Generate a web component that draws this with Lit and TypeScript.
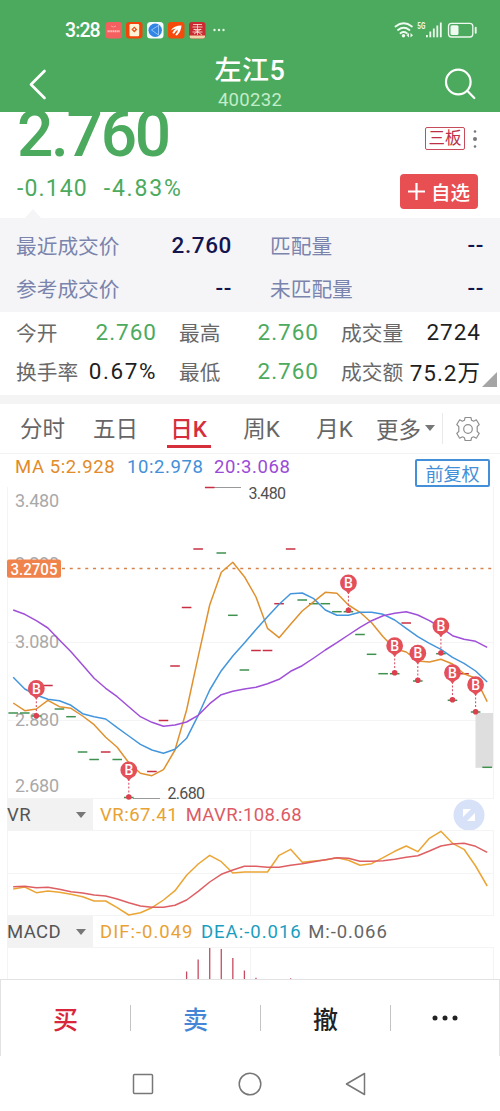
import { LitElement, html, svg, css } from "lit";
import { customElement } from "lit/decorators.js";
import { classMap } from "lit/directives/class-map.js";

const STEP = 11.56;
const px = (i: number) => 13.2 + STEP * i;
const line = (ys: number[]) => ys.map((y, i) => `${px(i).toFixed(1)},${y}`).join(" ");

const MA5 = [703, 710.7, 709, 700.3, 706.7, 708.3, 716, 724.7, 737.3, 747.3, 762.7, 773.3, 775.7, 769.7, 750, 710, 656.7, 605, 572.3, 562.3, 576.7, 597, 628.3, 637.7, 624.3, 611, 601.7, 592.3, 593.3, 605, 612.3, 622.7, 636.7, 648.7, 652, 661, 662, 659.3, 664, 673.7, 678.3, 701.7];
const MA10 = [677.3, 689, 695, 699.3, 700.7, 705.3, 713.7, 716.7, 719, 727.7, 736, 744.3, 750, 753.3, 749.3, 738.3, 715.3, 690, 670.7, 656, 643, 629.5, 616.7, 604.3, 593.7, 593, 598.7, 610, 615.3, 615.3, 612.3, 612.3, 614.3, 620, 628.3, 636.7, 643.3, 649.3, 657.3, 663.3, 671, 682];
const MA20 = [610, 614.3, 620.7, 628, 640, 651.7, 665, 678.3, 688.3, 696.7, 706.7, 716.7, 722.3, 726.3, 725, 722, 715.3, 703.7, 694.7, 691.3, 689, 687.3, 683.7, 679.3, 671.3, 665.7, 658, 650, 642.7, 635, 627.3, 620.7, 615.7, 613.3, 611.7, 615, 620.7, 627.5, 635.7, 639.3, 641.3, 647.3];
const VR = [889, 887, 892.7, 891, 892.3, 894.3, 896.7, 901, 901, 907.7, 915, 912.7, 907.7, 900, 890.7, 875.3, 864, 855.3, 861.7, 873, 872, 872, 872, 855.3, 849.3, 862.3, 861, 860, 857.7, 860.3, 865.3, 863.7, 857.7, 851.3, 846, 851.7, 838.3, 831.3, 843.3, 849.3, 866, 886];
const MAVR = [886.7, 886.3, 887.7, 887.3, 889.3, 891.7, 893, 895, 896, 899, 902.7, 906, 907.3, 907.3, 905.3, 900, 891.3, 882, 874.3, 870, 866.3, 866.3, 867.3, 867.3, 865.3, 863.7, 861.7, 859.7, 857.7, 858.3, 861.3, 861.3, 860.7, 859.3, 857.3, 855.7, 851, 846, 844, 843.3, 846.3, 852.3];

const UP: [number, number][] = [[3, 685.5], [8, 752], [12, 771.5], [13, 720.5], [14, 666], [15, 607.5], [16, 549], [17, 487.5], [21, 650.5], [22, 650.5], [23, 603.7], [24, 549], [34, 623], [39, 673.7]];
const DOWN: [number, number][] = [[0, 713], [1, 713], [2, 716], [4, 709], [5, 716.7], [6, 752], [7, 759.5], [9, 759.5], [10, 797.5], [18, 553], [19, 615.3], [20, 670], [25, 600], [26, 603.7], [27, 603.7], [28, 611.7], [29, 611.7], [30, 634.5], [31, 654.3], [32, 673.7], [33, 673.7], [35, 681], [37, 653.7], [38, 700.3], [40, 712], [41, 767.3]];
const BUYS: [number, number, number][] = [[2, 688.5, 715.7], [10, 770, 797], [29, 583, 610.3], [33, 645.7, 672.7], [35, 653.2, 680.3], [37, 626, 653], [38, 672.7, 699.8], [40, 684.7, 711.7]];
const MACD: [number, number][] = [[15, 971.5], [16, 959.5], [17, 948], [18, 949], [19, 958], [20, 970.5], [21, 977.8], [24, 978.3]];

@customElement("price-chart")
class PriceChart extends LitElement {
  static styles = css`
    :host { display: block; height: 319px; }
    svg { display: block; overflow: visible; }
    text { font-family: Roboto, "Liberation Sans", sans-serif; }
    .axis { fill: #a9a9a9; font-size: 18px; }
    .edge { fill: #505050; font-size: 16px; }
    .tag { fill: #fff; font-size: 17px; font-weight: 500; }
    .b { fill: #fff; font-size: 14px; font-weight: 500; text-anchor: middle; }
  `;
  render() {
    const dash = (color: string) => ([i, y]: [number, number]) =>
      svg`<path d="M${px(i) - 4.8} ${y}h9.6" stroke=${color} stroke-width="1.5"/>`;
    const axis = (v: string, y: number) => svg`<text class="axis" x="15" y=${y} textLength="44">${v}</text>`;
    return html`<svg width="500" height="319" viewBox="0 480 500 319">
      <path d="M7.5 487V799M493.5 487V799M7 642.5H493M7 720.5H493M7 798.5H493" stroke="#f4f4f4" fill="none"/>
      ${axis("3.480", 507)}${axis("3.280", 570)}${axis("3.080", 648)}${axis("2.880", 726)}${axis("2.680", 792)}
      <rect x="475.5" y="713" width="17.5" height="54.8" fill="#dedede"/>
      <path d="M62 568.6H493" stroke="#d98248" stroke-width="1.5" stroke-dasharray="3 4.75"/>
      <path d="M214 487.5h27M133 798.5h27" stroke="#999" stroke-width="1.1"/>
      ${DOWN.map(dash("#3f9150"))}${UP.map(dash("#c92f42"))}
      <g fill="none" stroke-width="1.5" stroke-linejoin="round">
        <polyline points=${line(MA5)} stroke="#e0912f"/>
        <polyline points=${line(MA10)} stroke="#4496dc"/>
        <polyline points=${line(MA20)} stroke="#a04fd8"/>
      </g>
      <rect x="7" y="559.5" width="54" height="18.3" rx="2" fill="#f0824c"/>
      <text class="tag" x="10.5" y="575" textLength="47" lengthAdjust="spacingAndGlyphs">3.2705</text>
      ${BUYS.map(([i, y, end]) => svg`
        <path d="M${px(i)} ${y + 9}V${end}" stroke="#d5566a" stroke-width="1.1" stroke-dasharray="2 1.8"/>
        <circle cx=${px(i)} cy=${end} r="2.8" fill="#dc3f50"/>
        <path d="M${px(i) - 3.4} ${y + 7}h6.8l-3.4 4z" fill="#e4505a"/>
        <circle cx=${px(i)} cy=${y} r="8.4" fill="#e4505a"/>
        <text class="b" x=${px(i)} y=${y + 5}>B</text>`)}
      <text class="edge" x="248.5" y="499" textLength="37.5">3.480</text>
      <text class="edge" x="167.5" y="799" textLength="37.5">2.680</text>
    </svg>`;
  }
}

@customElement("vr-chart")
class VrChart extends LitElement {
  static styles = css`:host { display: block; height: 86px; } svg { display: block; }`;
  render() {
    return html`<svg width="500" height="86" viewBox="0 830 500 86">
      <path d="M7.5 830V916M493.5 830V916M250.5 830V916M7 830.5H493M7 873.5H493M7 915.5H493" stroke="#f4f4f4" fill="none"/>
      <g fill="none" stroke-width="1.5" stroke-linejoin="round">
        <polyline points=${line(VR)} stroke="#eba534"/>
        <polyline points=${line(MAVR)} stroke="#de5f63"/>
      </g>
    </svg>`;
  }
}

@customElement("macd-chart")
class MacdChart extends LitElement {
  static styles = css`:host { display: block; height: 32px; } svg { display: block; }`;
  render() {
    return html`<svg width="500" height="32" viewBox="0 947 500 32">
      <path d="M7.5 947V979M493.5 947V979M250.5 947V979M7 947.5H493" stroke="#f4f4f4" fill="none"/>
      ${MACD.map(([i, y]) => svg`<path d="M${px(i)} ${y}V979" stroke="#c74b60" stroke-width="1.3"/>`)}
    </svg>`;
  }
}

@customElement("status-bar")
class StatusBar extends LitElement {
  static styles = css`
    :host { display: flex; align-items: center; height: 60px; padding: 0 23px 0 65px; color: #fff; }
    .time { width: 40px; font-size: 19.5px; font-weight: 500; letter-spacing: -0.9px; padding-top: 1px; }
    .dots { margin-left: 6px; }
    .right { margin-left: auto; }
    svg { display: block; }
  `;
  render() {
    return html`
      <span class="time">3:28</span>
      <svg width="102" height="18" viewBox="105 21 102 18">
        <rect x="105.5" y="22" width="16.5" height="16.5" rx="3" fill="#f4605f"/>
        <path d="M107.5 31.3h12.5" stroke="#ffc4c2" stroke-width="2" stroke-dasharray="1.3 .5"/>
        <path d="M111 26q2.5 2 5 0" stroke="#f99b98" fill="none"/>
        <rect x="126" y="22" width="16.5" height="16.5" rx="3" fill="#f14509"/>
        <rect x="129.5" y="24" width="9.7" height="12.3" rx="1.2" fill="#fff4d7"/>
        <path d="M134.3 26.5l3 3-3 3-3-3z" fill="#e85514"/><circle cx="134.3" cy="29.3" r=".9" fill="#fff"/>
        <rect x="147" y="22" width="16.5" height="16.5" rx="3.5" fill="#f5faff"/>
        <circle cx="155.2" cy="30.2" r="6.7" fill="#3185e5"/>
        <path d="M158.5 25.5l-7 4.5 7 5M158.500 25v10" stroke="#b9dcff" stroke-width=".7" fill="none"/>
        <rect x="168" y="22" width="16.5" height="16.5" rx="3" fill="#f44a0b"/>
        <path d="M170.800 30.500q3-5 10.700-5-.3 6-4.500 10l-1.800-.6q2.600-3 2.800-5.400-2.500 1.500-4 4.200l-1.700-.8q1.500-3 3.500-4.400-2.500.3-5 2z" fill="#fff"/>
        <rect x="189" y="22" width="16.5" height="16.5" rx="3" fill="#c92b31"/>
        <path d="M189.5 35.5h15.5v1a2 2 0 0 1-2 2h-11.5a2 2 0 0 1-2-2z" fill="#f3d3a8"/>
        <path d="M193 24.500h9M192.500 27h10M193.500 29.500h8M192.500 32h10M197.500 24v11M194 34l7-5M194 29l8 6" stroke="#ffe6dc" stroke-width=".8"/>
      </svg>
      <svg class="dots" width="13" height="4" viewBox="0 0 13 4"><g fill="#e5f5e7"><circle cx="1.5" cy="2" r="1.2"/><circle cx="6" cy="2" r="1.2"/><circle cx="10.5" cy="2" r="1.2"/></g></svg>
      <svg class="right" width="84" height="18" viewBox="393 21 84 18">
        <g fill="none" stroke="#eef9ef" stroke-width="1.8" stroke-linecap="round">
          <path d="M395.5 26.5q8.2-6.5 16.4 0M398 30q5.7-4.5 11.4 0M400.5 33.2q3.2-2.4 6.4 0"/>
          <rect x="448.5" y="23.3" width="24.3" height="13.7" rx="3" stroke-width="1.3"/>
          <path d="M475.7 27.8v5" stroke-width="1.9"/>
        </g>
        <g fill="#eef9ef">
          <circle cx="403.5" cy="35.8" r="1.7"/><path d="M409 33l-2.5 2.3 2.5 2.3zM410.5 33l2.5 2.3-2.5 2.3z"/>
          <rect x="426" y="35" width="1.8" height="2.3"/><rect x="429.4" y="31.5" width="1.8" height="5.8"/><rect x="432.9" y="28.5" width="1.8" height="8.8"/><rect x="436.4" y="25.5" width="1.8" height="11.8"/><rect x="439.9" y="22.5" width="1.8" height="14.8"/>
          <rect x="450.5" y="25.3" width="8" height="9.7" rx="1.5"/>
          <text x="417.3" y="29" font-size="9" font-weight="700" textLength="8" lengthAdjust="spacingAndGlyphs">5G</text>
        </g>
      </svg>`;
  }
}

@customElement("app-root")
class AppRoot extends LitElement {
  static styles = css`
    :host { display: block; width: 500px; height: 1111px; overflow: hidden; background: #fff;
      font-family: Roboto, "Noto Sans CJK SC", sans-serif; color: #666; white-space: nowrap; }
    * { box-sizing: border-box; }
    svg { display: block; }
    header { height: 112px; background: #4caa5e; color: #fff; }
    .bar { display: grid; grid-template-columns: 80px 1fr 80px; height: 52px; }
    .back { margin: 9px 0 0 27px; }
    .find { margin: 7px 0 0 24px; }
    .title { display: flex; flex-direction: column; align-items: center; }
    .name { font-size: 27px; line-height: 28px; font-weight: 500; letter-spacing: 0.6px; margin-top: -3px; }
    .code { font-size: 18.5px; line-height: 20px; letter-spacing: 0.3px; color: #c3ecc9; margin-top: 5px; }
    .quote { display: flex; justify-content: space-between; height: 106px; padding: 0 22px 0 17px; overflow: hidden; }
    .price { font-size: 64px; line-height: 64px; font-weight: 500; letter-spacing: -2.3px; color: #4caa5e; margin-top: -9px; }
    .change { display: flex; gap: 16px; font-size: 23px; line-height: 26px; letter-spacing: 1.1px; color: #4caa5e; margin-top: 9px; }
    .pct { letter-spacing: 1.8px; }
    .notch { width: 0; border: 8px solid transparent; border-top: 0; border-bottom: 9px solid #f5f5f8; margin: 7px 0 0 8px; }
    .side { display: flex; flex-direction: column; align-items: flex-end; }
    .board { display: flex; align-items: center; gap: 8px; margin: 15px 1px 0 0; }
    .tag { width: 40px; height: 23px; border: 1px solid #c84b5c; border-radius: 2px; color: #bd3047; font-size: 16.5px; line-height: 21px; text-align: center; }
    .add { display: flex; align-items: center; gap: 6px; width: 78px; height: 35px; margin-top: 24px; padding-left: 8px; border-radius: 4px; background: #e74f53; color: #fff; font-size: 19.5px; font-weight: 500; }
    .match { height: 94px; background: #f5f5f8; padding: 5px 16px 0 16px; }
    .mrow { display: grid; grid-template-columns: 104px 112px 38px 104px 1fr; height: 43px; align-items: center; font-size: 20.7px; color: #7a84ac; }
    .val { text-align: right; font-size: 22.5px; letter-spacing: 1px; }
    .navy { color: #14144f; font-weight: 500; letter-spacing: .6px; }
    .cellpad { grid-column: 4; }
    .stats { position: relative; height: 83px; padding: 0 19px 0 16px; }
    .srow { display: grid; grid-template-columns: 65px 76px 22px 60px 80px 22px 64px 1fr; height: 39px; align-items: center; font-size: 20.7px; color: #686868; }
    .corner { position: absolute; right: 3px; bottom: 8px; border-left: 15px solid transparent; border-bottom: 15px solid #a5a5a5; }
    .green { color: #4caa5e; }
    .ink { color: #1e1e1e; }
    .wide { letter-spacing: 1.6px; margin-left: -4px; }
    .c3 { grid-column: 4; } .c6 { grid-column: 7; }
    .gap { height: 9px; background: #f4f4f5; }
    .tabs { display: flex; height: 50px; padding-left: 6px; font-size: 22.5px; border-bottom: 1px solid #f2f2f2; }
    .tab { display: flex; flex-direction: column; align-items: center; width: 73px; line-height: 32px; padding-top: 9px; }
    .tab::after { content: ""; width: 44px; height: 3px; margin-top: 0; }
    .on { color: #d52f3b; font-weight: 500; }
    .on::after { background: #d52f3b; }
    .more { display: flex; align-items: center; gap: 4px; width: 71.5px; padding: 0 0 2px 5px; border-right: 1px solid #e9e9e9; height: 31px; margin-top: 9px; }
    .gear { margin: 12px 0 0 12.5px; }
    .legend { display: flex; align-items: flex-start; height: 26px; padding: 3px 10px 0 15px; font-size: 18.5px; line-height: 20px; letter-spacing: .6px; }
    .ma5 { width: 112px; color: #e28b2b; } .ma10 { width: 87px; color: #4390d8; } .ma20 { color: #9a4bd6; }
    .adj { margin: 1.5px 0 0 auto; flex: none; width: 75px; height: 28px; border: 2px solid #4390d8; border-radius: 2px; color: #4390d8; font-size: 18px; line-height: 27px; text-align: center; letter-spacing: 0; }
    .sub { display: flex; align-items: center; height: 31px; padding-left: 7px; font-size: 18.5px; letter-spacing: .5px; }
    .macd { letter-spacing: 1px; }
    .pick { display: flex; align-items: center; justify-content: space-between; width: 86px; height: 100%; padding-right: 7px; background: #f2f2f2; color: #555; margin-right: 7px; letter-spacing: .4px; }
    .caret { border: 5.5px solid transparent; border-top: 6px solid #777; border-bottom: 0; }
    .amber { color: #e8a233; margin-right: 7.5px; } .rose { color: #dc5b65; letter-spacing: .4px; } .cyan { color: #1b9dbf; margin-right: 6.5px; }
    .last { letter-spacing: .9px; }
    .zoom { margin: 0 15.5px 0 auto; }
    .actions { display: grid; grid-template-columns: repeat(4, 130px); height: 77px; border: 1px solid #e2e2e2; border-bottom: 0; font-size: 25px; align-items: center; overflow: hidden; }
    .act { display: flex; justify-content: center; align-items: center; height: 26px; border-right: 1px solid #c4c4c4; }
    .act:last-child { width: 108px; border: 0; }
    .buy { color: #d9263c; font-weight: 500; } .sell { color: #4586d6; font-weight: 500; } .undo { color: #222; font-weight: 500; }
    .nav { display: flex; justify-content: space-between; align-items: center; height: 55px; padding: 0 133px 0 132px; }
  `;

  render() {
    const tabs = ["分时", "五日", "日K", "周K", "月K"];
    return html`
      <header>
        <status-bar></status-bar>
        <div class="bar">
          <svg class="back" width="22" height="32" viewBox="27 69 22 32"><path d="M44.5 71L31 84.5 44.5 98" fill="none" stroke="#fff" stroke-width="2.7" stroke-linecap="round" stroke-linejoin="round"/></svg>
          <div class="title"><span class="name">左江5</span><span class="code">400232</span></div>
          <svg class="find" width="34" height="34" viewBox="444 67 34 34"><g fill="none" stroke="#fff" stroke-width="2.2" stroke-linecap="round"><circle cx="458.3" cy="82" r="12.3"/><path d="M467.5 91l6.8 7"/></g></svg>
        </div>
      </header>
      <section class="quote">
        <div>
          <div class="price">2.760</div>
          <div class="change"><span>-0.140</span><span class="pct">-4.83%</span></div>
          <div class="notch"></div>
        </div>
        <div class="side">
          <div class="board"><span class="tag">三板</span>
            <svg width="4" height="20" viewBox="0 0 4 20"><g fill="#777"><circle cx="2" cy="2.5" r="1.3"/><circle cx="2" cy="10" r="2"/><circle cx="2" cy="17.5" r="1.3"/></g></svg></div>
          <div class="add"><svg width="17" height="17" viewBox="0 0 17 17"><path d="M8.5 0v17M0 8.5h17" stroke="#fff" stroke-width="2.2"/></svg>自选</div>
        </div>
      </section>
      <section class="match">
        <div class="mrow"><span>最近成交价</span><span class="val navy">2.760</span><span class="cellpad">匹配量</span><span class="val navy">--</span></div>
        <div class="mrow"><span>参考成交价</span><span class="val navy">--</span><span class="cellpad">未匹配量</span><span class="val navy">--</span></div>
      </section>
      <section class="stats">
        <div class="srow"><span>今开</span><span class="val green">2.760</span><span class="c3">最高</span><span class="val green">2.760</span><span class="c6">成交量</span><span class="val ink">2724</span></div>
        <div class="srow"><span>换手率</span><span class="val ink wide">0.67%</span><span class="c3">最低</span><span class="val green">2.760</span><span class="c6">成交额</span><span class="val ink">75.2万</span></div>
        <i class="corner"></i>
      </section>
      <div class="gap"></div>
      <nav class="tabs">
        ${tabs.map((t, i) => html`<span class=${classMap({ tab: true, on: i === 2 })}>${t}</span>`)}
        <span class="more">更多<i class="caret"></i></span>
        <svg class="gear" width="26" height="26" viewBox="-13 -13 26 26"><g fill="none" stroke="#8e8e8e" stroke-width="1.2" stroke-linejoin="round">
          <path d="M-2.9-11.5H2.9L3.6-8.7 5.6-7.8 8.3-9.2 11.2-4.5 9.2-2.4V2.4L11.2 4.5 8.3 9.2 5.6 7.8 3.6 8.7 2.9 11.5H-2.9L-3.6 8.7-5.6 7.8-8.3 9.2-11.2 4.5-9.2 2.4V-2.4L-11.2-4.5-8.3-9.2-5.6-7.8-3.6-8.7Z"/><circle r="4.3"/></g></svg>
      </nav>
      <div class="legend"><span class="ma5">MA 5:2.928</span><span class="ma10">10:2.978</span><span class="ma20">20:3.068</span><span class="adj">前复权</span></div>
      <price-chart></price-chart>
      <div class="sub"><span class="pick">VR<i class="caret"></i></span><span class="amber">VR:67.41</span><span class="rose">MAVR:108.68</span>
        <svg class="zoom" width="32" height="32" viewBox="0 0 32 32"><circle cx="16" cy="16" r="15.5" fill="#d7e1f7"/><path d="M10 10h8l-8 8zM22 22h-8l8-8z" fill="#fff"/></svg></div>
      <vr-chart></vr-chart>
      <div class="sub macd"><span class="pick">MACD<i class="caret"></i></span><span class="amber">DIF:-0.049</span><span class="cyan">DEA:-0.016</span><span class="last">M:-0.066</span></div>
      <macd-chart></macd-chart>
      <div class="actions">
        <span class="act buy">买</span><span class="act sell">卖</span><span class="act undo">撤</span>
        <span class="act"><svg width="26" height="6" viewBox="0 0 26 6"><g fill="#222"><circle cx="3" cy="3" r="2.5"/><circle cx="13" cy="3" r="2.5"/><circle cx="23" cy="3" r="2.5"/></g></svg></span>
      </div>
      <div class="nav">
        <svg width="22" height="22" viewBox="0 0 22 22"><rect x="1.5" y="1.5" width="19" height="19" rx="1" fill="none" stroke="#777" stroke-width="1.5"/></svg>
        <svg width="24" height="24" viewBox="0 0 24 24"><circle cx="12" cy="12" r="10.8" fill="none" stroke="#777" stroke-width="1.5"/></svg>
        <svg width="22" height="24" viewBox="0 0 22 24"><path d="M19.5 1.5v21L1.5 12z" fill="none" stroke="#777" stroke-width="1.5" stroke-linejoin="round"/></svg>
      </div>`;
  }
}
